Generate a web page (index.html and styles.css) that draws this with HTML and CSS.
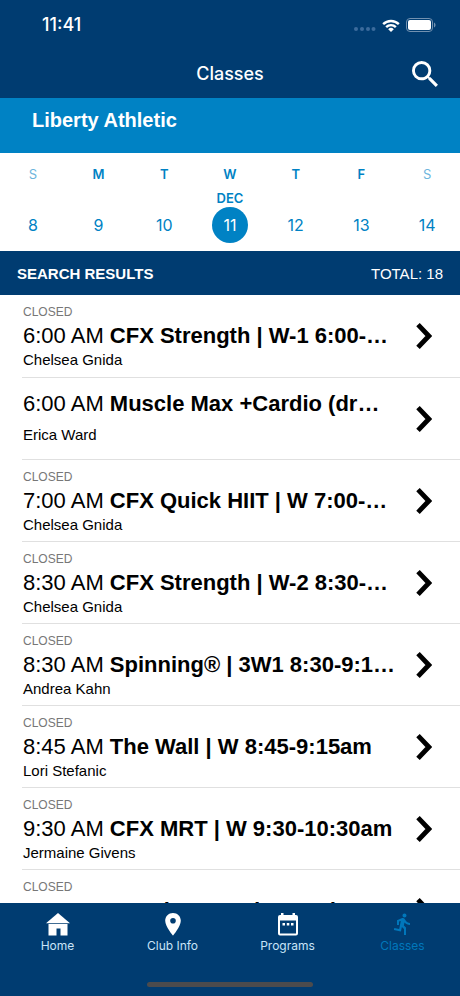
FILE: index.html
```html
<!DOCTYPE html>
<html lang="en">
<head>
<meta charset="utf-8">
<meta name="viewport" content="width=device-width, initial-scale=1">
<title>Classes</title>
<link rel="stylesheet" href="styles.css">
</head>
<body>
<div class="app">
  <header class="top">
    <div class="status">
      <span class="clock">11:41</span>
      <div class="status-icons">
        <svg class="signal" viewBox="0 0 22 4" aria-hidden="true"><circle cx="2" cy="2" r="2"/><circle cx="8" cy="2" r="2"/><circle cx="14" cy="2" r="2"/><circle cx="19.500" cy="2" r="2"/></svg>
        <svg class="wifi" viewBox="0 0 18 13" aria-hidden="true"><path d="M0.300 4.200a12.500 12.500 0 0 1 17.400 0l-1.700 1.800a10 10 0 0 0-14 0z"/><path d="M3.300 7.200a8.200 8.200 0 0 1 11.400 0l-1.700 1.700a5.800 5.800 0 0 0-8 0z"/><path d="M6.200 10.200a4 4 0 0 1 5.600 0L9 13z"/></svg>
        <svg class="battery" viewBox="0 0 30 14" aria-hidden="true"><rect class="case" x="0.500" y="0.500" width="26" height="13" rx="3.500"/><rect x="2" y="2" width="23" height="10" rx="2"/><path class="cap" d="M28 4.500c2 .8 2 4.200 0 5z"/></svg>
      </div>
    </div>
    <div class="title-bar">
      <h1>Classes</h1>
      <button class="search" type="button" aria-label="Search">
        <svg viewBox="3 3 17.500 17.500" aria-hidden="true"><path d="M15.500 14h-.79l-.28-.27A6.471 6.471 0 0 0 16 9.500 6.500 6.500 0 1 0 9.500 16c1.610 0 3.090-.59 4.230-1.570l.27.28v.79l5 4.990L20.490 19l-4.990-5zm-6 0C7.010 14 5 11.990 5 9.500S7.010 5 9.500 5 14 7.010 14 9.500 11.990 14 9.500 14z"/></svg>
      </button>
    </div>
  </header>
  <h2 class="club">Liberty Athletic</h2>
  <div class="week">
    <button class="day weekend" type="button"><span class="letter">S</span><span class="month"></span><span class="date">8</span></button>
    <button class="day" type="button"><span class="letter">M</span><span class="month"></span><span class="date">9</span></button>
    <button class="day" type="button"><span class="letter">T</span><span class="month"></span><span class="date">10</span></button>
    <button class="day selected" type="button"><span class="letter">W</span><span class="month">DEC</span><span class="date">11</span></button>
    <button class="day" type="button"><span class="letter">T</span><span class="month"></span><span class="date">12</span></button>
    <button class="day" type="button"><span class="letter">F</span><span class="month"></span><span class="date">13</span></button>
    <button class="day weekend" type="button"><span class="letter">S</span><span class="month"></span><span class="date">14</span></button>
  </div>
  <div class="results">
    <h2>SEARCH RESULTS</h2>
    <span>TOTAL: 18</span>
  </div>
  <svg class="defs" aria-hidden="true"><symbol id="chevron" viewBox="0 0 16 26"><path d="M2 1.700L12.800 13 2 24.300" fill="none" stroke="#000" stroke-width="4.800"/></symbol></svg>
  <ul class="list">
    <li><a class="row" href="#"><span class="info"><span class="state">CLOSED</span><span class="name"><span class="time">6:00 AM</span> CFX Strength | W-1 6:00-…</span><span class="coach">Chelsea Gnida</span></span><svg class="chevron" aria-hidden="true"><use href="#chevron"/></svg></a></li>
    <li><a class="row open" href="#"><span class="info"><span class="name"><span class="time">6:00 AM</span> Muscle Max +Cardio (dr…</span><span class="coach">Erica Ward</span></span><svg class="chevron" aria-hidden="true"><use href="#chevron"/></svg></a></li>
    <li><a class="row" href="#"><span class="info"><span class="state">CLOSED</span><span class="name"><span class="time">7:00 AM</span> CFX Quick HIIT | W 7:00-…</span><span class="coach">Chelsea Gnida</span></span><svg class="chevron" aria-hidden="true"><use href="#chevron"/></svg></a></li>
    <li><a class="row" href="#"><span class="info"><span class="state">CLOSED</span><span class="name"><span class="time">8:30 AM</span> CFX Strength | W-2 8:30-…</span><span class="coach">Chelsea Gnida</span></span><svg class="chevron" aria-hidden="true"><use href="#chevron"/></svg></a></li>
    <li><a class="row" href="#"><span class="info"><span class="state">CLOSED</span><span class="name"><span class="time">8:30 AM</span> Spinning® | 3W1 8:30-9:1…</span><span class="coach">Andrea Kahn</span></span><svg class="chevron" aria-hidden="true"><use href="#chevron"/></svg></a></li>
    <li><a class="row" href="#"><span class="info"><span class="state">CLOSED</span><span class="name"><span class="time">8:45 AM</span> The Wall | W 8:45-9:15am</span><span class="coach">Lori Stefanic</span></span><svg class="chevron" aria-hidden="true"><use href="#chevron"/></svg></a></li>
    <li><a class="row" href="#"><span class="info"><span class="state">CLOSED</span><span class="name"><span class="time">9:30 AM</span> CFX MRT | W 9:30-10:30am</span><span class="coach">Jermaine Givens</span></span><svg class="chevron" aria-hidden="true"><use href="#chevron"/></svg></a></li>
    <li><a class="row" href="#"><span class="info"><span class="state">CLOSED</span><span class="name"><span class="time">9:30 AM</span> Dancing Good Rounds</span></span><svg class="chevron" aria-hidden="true"><use href="#chevron"/></svg></a></li>
  </ul>
  <nav class="tabs">
    <div class="tab-row">
      <a href="#"><svg viewBox="0 0 24 24" aria-hidden="true"><path d="M12 1L24 11.200H0z"/><path d="M2.500 12h19v11.500h-7V16.500h-4v7h-8z"/></svg>Home</a>
      <a href="#"><svg viewBox="0 0 24 24" aria-hidden="true"><path fill-rule="evenodd" d="M12 1C7.600 1 4.200 4.400 4.200 8.700 4.200 14.500 12 23.500 12 23.500s7.800-9 7.800-14.800C19.800 4.400 16.400 1 12 1zm0 10.500a2.800 2.800 0 1 1 0-5.600 2.800 2.800 0 0 1 0 5.600z"/></svg>Club Info</a>
      <a href="#"><svg viewBox="0 0 24 24" aria-hidden="true"><path fill-rule="evenodd" d="M5 1h2.500v2h9V1H19v2h1a2 2 0 0 1 2 2v16.500a2 2 0 0 1-2 2H4a2 2 0 0 1-2-2V5a2 2 0 0 1 2-2h1zM4 8.500v13h16v-13z"/><path d="M6.500 11H9v2.500H6.500zM10.800 11h2.500v2.500h-2.500zM15 11h2.500v2.500H15z"/></svg>Programs</a>
      <a class="current" href="#" aria-current="page"><svg viewBox="0 0 24 24" aria-hidden="true"><path d="M13.490 5.480c1.100 0 2-.9 2-2s-.9-2-2-2-2 .9-2 2 .9 2 2 2zm-3.600 13.900l1-4.400 2.100 2v6h2v-7.500l-2.100-2 .6-3c1.300 1.500 3.300 2.500 5.500 2.500v-2c-1.900 0-3.500-1-4.300-2.400l-1-1.600c-.4-.6-1-1-1.700-1-.3 0-.5.1-.8.1l-5.200 2.200v4.700h2v-3.400l1.800-.7-1.600 8.100-4.900-1-.4 2 7 1.400z"/></svg>Classes</a>
    </div>
    <div class="home-bar"></div>
  </nav>
</div>
</body>
</html>
```
FILE: styles.css
```css
* { box-sizing: border-box; }
body {
  margin: 0;
  background: #fff;
  color: #000;
  font-family: "Liberation Sans", Arial, sans-serif;
}
h1, h2, ul { margin: 0; padding: 0; }
ul { list-style: none; }
a { color: inherit; text-decoration: none; }
button { border: 0; padding: 0; background: none; font: inherit; cursor: pointer; }
svg { display: block; fill: currentColor; }

.app { display: flex; flex-direction: column; height: 100vh; }
.app > * { flex: none; }

.top {
  background: #003c71;
  color: #fff;
  font-family: Inter, sans-serif;
}
.status {
  display: flex;
  justify-content: space-between;
  align-items: center;
  height: 50px;
  padding: 0 24px 0 42px;
}
.clock { font-size: 18px; font-weight: 500; line-height: 20px; }
.status-icons { display: flex; align-items: center; gap: 6px; }
.signal { width: 22px; height: 4px; margin-top: 8px; color: #3b6b9c; }
.wifi { width: 18px; height: 13px; }
.battery { width: 30px; height: 14px; }
.battery .case { fill: none; stroke: #7291b0; }
.battery .cap { fill: #7291b0; }
.title-bar {
  display: grid;
  grid-template-columns: 1fr auto 1fr;
  align-items: center;
  height: 48px;
  padding: 0 22px;
}
.title-bar h1 { grid-column: 2; font-size: 18px; font-weight: 500; line-height: 24px; }
.search { justify-self: end; color: #fff; }
.search svg { width: 26px; height: 26px; }

.club {
  min-height: 55px;
  padding: 10px 32px;
  background: #0082c4;
  color: #fff;
  font-size: 20px;
  line-height: 24px;
}

.week {
  display: grid;
  grid-template-columns: repeat(7, 1fr);
  padding: 12px 0 8px;
  font-family: Inter, sans-serif;
  color: #0082c4;
}
.day { display: flex; flex-direction: column; align-items: center; color: inherit; }
.letter, .month { font-size: 13px; font-weight: 600; line-height: 18px; }
.month { height: 18px; margin-top: 6px; }
.weekend .letter { font-weight: 400; color: #6db5dd; }
.date {
  width: 36px;
  height: 36px;
  border-radius: 50%;
  font-size: 16px;
  line-height: 36px;
}
.selected .date { background: #0082c4; color: #fff; }

.results {
  display: flex;
  justify-content: space-between;
  align-items: center;
  height: 44px;
  padding: 0 17px;
  background: #003c71;
  color: #fff;
  font-size: 15px;
}
.results h2 { font-size: 15px; }

.defs { width: 0; height: 0; }
.app > .list { flex: 1; min-height: 0; overflow: hidden; padding-left: 22px; }
.row {
  display: flex;
  align-items: center;
  gap: 16px;
  height: 82px;
  padding: 0 28px 0 1px;
}
.list li { border-bottom: 1px solid #e0e0e0; }
.list li:nth-child(n+2) .row { height: 81px; }
.info { flex: 1; min-width: 0; height: 100%; padding-top: 9px; }
.info > span { display: block; }
.state { color: #777; font-size: 12px; line-height: 16px; }
.name {
  padding: 2px 0 0;
  overflow: hidden;
  white-space: nowrap;
  text-overflow: ellipsis;
  font-size: 22px;
  font-weight: 700;
  line-height: 28px;
}
.time { font-weight: 400; }
.coach { font-size: 15px; line-height: 20px; }
.open .name { padding-top: 3px; }
.open .coach { margin-top: 7px; }
.chevron { width: 16px; height: 26px; }

.tabs { background: #003c71; color: #fff; font-family: Inter, sans-serif; }
.tab-row { display: grid; grid-template-columns: repeat(4, 1fr); padding-top: 9px; }
.tab-row a {
  display: flex;
  flex-direction: column;
  align-items: center;
  gap: 2px;
  font-size: 12px;
  line-height: 16px;
  color: #c8e4f8;
}
.tab-row svg { width: 24px; height: 24px; color: #fff; }
.tab-row .current, .tab-row .current svg { color: #0077bb; }
.home-bar {
  width: 36%;
  height: 5px;
  margin: 28px auto 9px;
  border-radius: 3px;
  background: #4b4b4d;
}
```
